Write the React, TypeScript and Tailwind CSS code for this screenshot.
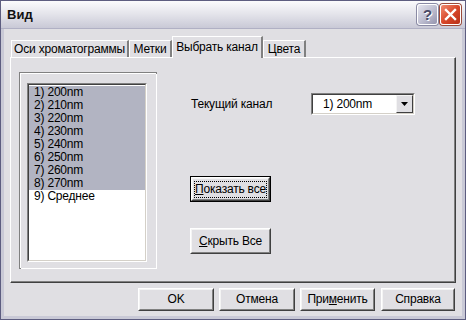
import React from 'react';

const font = { fontFamily: '"Liberation Sans", Arial, sans-serif' };

const items = ['1) 200nm', '2) 210nm', '3) 220nm', '4) 230nm', '5) 240nm', '6) 250nm', '7) 260nm', '8) 270nm', '9) Среднее'];

function Btn({ children, className = '', focused = false }: { children: React.ReactNode; className?: string; focused?: boolean }) {
  return (
    <div className={`${className} ${focused ? 'border border-black' : ''} bg-[#e0dfe3] whitespace-nowrap`}>
      <div className="h-full w-full border border-t-white border-l-white border-r-[#404040] border-b-[#404040]">
        <div className="h-full w-full border border-t-[#f4f4f4] border-l-[#f4f4f4] border-r-[#808080] border-b-[#808080] flex items-center justify-center">
          {focused ? (
            <span className="border border-dotted border-black leading-[15px]">{children}</span>
          ) : (
            <span className="leading-[15px]">{children}</span>
          )}
        </div>
      </div>
    </div>
  );
}

function Tab({ label, active = false, className = '' }: { label: string; active?: boolean; className?: string }) {
  if (active) {
    return (
      <div className={`relative z-10 -mb-[1px] h-[22px] bg-[#e0dfe3] border-t border-l border-white border-r-2 border-r-[#808080] flex items-center justify-center whitespace-nowrap pb-[2px] ${className}`}>
        {label}
      </div>
    );
  }
  return (
    <div className={`mt-[4px] h-[17px] border-t border-l border-white border-r-2 border-r-[#808080] flex items-center justify-center whitespace-nowrap ${className}`}>
      {label}
    </div>
  );
}

export default function App() {
  return (
    <div className="w-[466px] h-[320px] bg-[#5d5d80] p-[1px] text-black text-[12px] tracking-[-0.2px]" style={font}>
      <div className="w-full h-full bg-[#e0dfe3] border-[3px] border-[#c9c9d6] border-t-0 flex flex-col">
        {/* title bar */}
        <div className="h-[28px] -mx-[3px] shrink-0 bg-gradient-to-b from-[#fbfbfd] via-[#e3e3ea] to-[#c9c9d6] flex items-center pl-[6px] pr-[4px] border-b border-[#b0b0c4]">
          <span className="font-bold text-[13px] tracking-normal text-[#111]">Вид</span>
          <div className="ml-auto flex gap-[2px]">
            <div className="w-[21px] h-[21px] rounded-[3px] border border-white bg-gradient-to-br from-[#e4e4ee] via-[#c0c0d2] to-[#9494ae] flex items-center justify-center shadow-[0_0_0_1px_#8a8aa4]">
              <span className="text-[#4a4a66] font-bold text-[15px] leading-none [text-shadow:1px_1px_0_#ffffff]">?</span>
            </div>
            <div className="w-[21px] h-[21px] rounded-[3px] border border-white bg-gradient-to-br from-[#f08a70] via-[#d8472a] to-[#b83018] flex items-center justify-center shadow-[0_0_0_1px_#9a4a3a]">
              <svg width="13" height="13" viewBox="0 0 13 13">
                <path d="M2 2 L11 11 M11 2 L2 11" stroke="white" strokeWidth="2.4" strokeLinecap="square" />
              </svg>
            </div>
          </div>
        </div>

        {/* client */}
        <div className="flex-1 flex flex-col px-[6px] pt-[7px]">
          <div className="flex items-end pl-[1px] h-[21px]">
            <Tab label="Оси хроматограммы" className="w-[118px]" />
            <Tab label="Метки" className="w-[43px]" />
            <Tab label="Выбрать канал" active className="w-[91px]" />
            <Tab label="Цвета" className="w-[43px]" />
          </div>
          <div className="h-[226px] border-t border-l border-white border-r border-b border-r-[#404040] border-b-[#404040]">
            <div className="h-full border-r border-b border-[#808080] flex pl-[8px] pt-[14px]">
              {/* group */}
              <div className="w-[138px] h-[197px] border border-[#808080]">
                <div className="w-full h-full border-l border-t border-white border-r-0 border-b-0 shadow-[1px_1px_0_0_white] pl-[6px] pt-[9px]">
                  <div className="w-[120px] h-[179px] border border-t-[#808080] border-l-[#808080] border-r-white border-b-white">
                    <div className="w-full h-full border border-t-[#404040] border-l-[#404040] border-r-[#d4d0c8] border-b-[#d4d0c8] bg-white pt-[1px]">
                      {items.map((t, i) => (
                        <div key={t} className={`h-[13px] leading-[13px] pl-[5px] whitespace-nowrap ${i < 8 ? 'bg-[#b2b4c2]' : ''}`}>
                          {t}
                        </div>
                      ))}
                    </div>
                  </div>
                </div>
              </div>
              {/* right side */}
              <div className="flex flex-col pl-[34px] pt-[21px]">
                <div className="flex items-center h-[22px]">
                  <span className="w-[120px] whitespace-nowrap">Текущий канал</span>
                  <div className="w-[104px] h-[22px] border border-t-[#808080] border-l-[#808080] border-r-white border-b-white">
                    <div className="w-full h-full border border-t-[#404040] border-l-[#404040] border-r-[#d4d0c8] border-b-[#d4d0c8] bg-white flex items-center">
                      <span className="pl-[10px] whitespace-nowrap">1) 200nm</span>
                      <div className="ml-auto w-[17px] h-[18px] bg-[#e0dfe3] border border-t-[#f4f4f4] border-l-[#f4f4f4] border-r-[#404040] border-b-[#404040] flex items-center justify-center">
                        <svg width="7" height="4" viewBox="0 0 7 4">
                          <path d="M0 0 H7 L3.5 4 Z" fill="black" />
                        </svg>
                      </div>
                    </div>
                  </div>
                </div>
                <Btn focused className="mt-[61px] w-[81px] h-[26px] -ml-[1px]">
                  <span className="underline">П</span>оказать все
                </Btn>
                <Btn className="mt-[26px] w-[81px] h-[26px] -ml-[1px]">
                  <span className="underline">С</span>крыть Все
                </Btn>
              </div>
            </div>
          </div>
          <div className="flex justify-end gap-[5px] pt-[5px] pr-[1px]">
            <Btn className="w-[76px] h-[23px]">OK</Btn>
            <Btn className="w-[76px] h-[23px]">Отмена</Btn>
            <Btn className="w-[75px] h-[23px]">При<span className="underline">м</span>енить</Btn>
            <Btn className="w-[74px] h-[23px] ml-[1px]">Справка</Btn>
          </div>
        </div>
      </div>
    </div>
  );
}
